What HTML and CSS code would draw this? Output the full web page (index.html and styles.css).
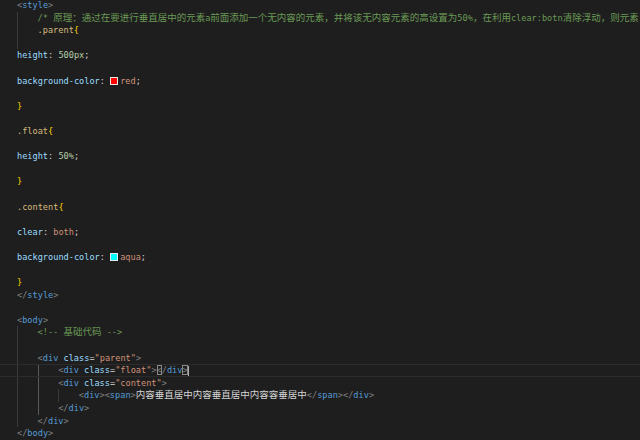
FILE: index.html
```html
<!DOCTYPE html>
<html>
<head>
<meta charset="utf-8">
<link rel="stylesheet" href="styles.css">
</head>
<body>
<div class="editor">
<div class="ln"><span class="p">&lt;</span><span class="t">style</span><span class="p">&gt;</span></div>
<div class="ln"><span class="g"></span><span class="c">/* <span class="zh">原理：通过在要进行垂直居中的元素</span>a<span class="zh">前面添加一个无内容的元素，并将该无内容元素的高设置为</span>50%<span class="zh">，在利用</span>clear:botn<span class="zh">清除浮动，则元素</span></span></div>
<div class="ln"><span class="g"></span><span class="sel">.parent</span><span class="b">{</span></div>
<div class="ln"><span class="g"></span></div>
<div class="ln"><span class="pr">height</span>: <span class="n">500px</span>;</div>
<div class="ln"></div>
<div class="ln"><span class="pr">background-color</span>: <span class="sw sw-red"></span><span class="v">red</span>;</div>
<div class="ln"></div>
<div class="ln"><span class="b">}</span></div>
<div class="ln"></div>
<div class="ln"><span class="sel">.float</span><span class="b">{</span></div>
<div class="ln"></div>
<div class="ln"><span class="pr">height</span>: <span class="n">50%</span>;</div>
<div class="ln"></div>
<div class="ln"><span class="b">}</span></div>
<div class="ln"></div>
<div class="ln"><span class="sel">.content</span><span class="b">{</span></div>
<div class="ln"></div>
<div class="ln"><span class="pr">clear</span>: <span class="v">both</span>;</div>
<div class="ln"></div>
<div class="ln"><span class="pr">background-color</span>: <span class="sw sw-aqua"></span><span class="v">aqua</span>;</div>
<div class="ln"></div>
<div class="ln"><span class="b">}</span></div>
<div class="ln"><span class="p">&lt;/</span><span class="t">style</span><span class="p">&gt;</span></div>
<div class="ln"></div>
<div class="ln"><span class="p">&lt;</span><span class="t">body</span><span class="p">&gt;</span></div>
<div class="ln"><span class="g"></span><span class="c">&lt;!-- <span class="zh">基础代码</span> --&gt;</span></div>
<div class="ln"><span class="g"></span></div>
<div class="ln"><span class="g"></span><span class="p">&lt;</span><span class="t">div</span> <span class="a">class</span>=<span class="s">"parent"</span><span class="p">&gt;</span></div>
<div class="ln cur"><span class="g"></span><span class="g ga"></span><span class="p">&lt;</span><span class="t">div</span> <span class="a">class</span>=<span class="s">"float"</span><span class="p">&gt;</span><span class="p m">&lt;</span><span class="p">/</span><span class="t">div</span><span class="p m">&gt;</span><span class="caret"></span></div>
<div class="ln"><span class="g"></span><span class="g ga"></span><span class="p">&lt;</span><span class="t">div</span> <span class="a">class</span>=<span class="s">"content"</span><span class="p">&gt;</span></div>
<div class="ln"><span class="g"></span><span class="g ga"></span><span class="g"></span><span class="p">&lt;</span><span class="t">div</span><span class="p">&gt;&lt;</span><span class="t">span</span><span class="p">&gt;</span><span class="tx zh">内容垂直居中内容垂直居中内容容垂居中</span><span class="p">&lt;/</span><span class="t">span</span><span class="p">&gt;&lt;/</span><span class="t">div</span><span class="p">&gt;</span></div>
<div class="ln"><span class="g"></span><span class="g ga"></span><span class="p">&lt;/</span><span class="t">div</span><span class="p">&gt;</span></div>
<div class="ln"><span class="g"></span><span class="p">&lt;/</span><span class="t">div</span><span class="p">&gt;</span></div>
<div class="ln"><span class="p">&lt;/</span><span class="t">body</span><span class="p">&gt;</span></div>
</div>
</body>
</html>
```
FILE: styles.css
```css
html, body {
  margin: 0;
  padding: 0;
  background: #1e1e1e;
  height: 100%;
  overflow: hidden;
}
.editor {
  margin-top: -1px;
  padding-left: 17px;
  font-family: "DejaVu Sans Mono", "Liberation Mono", "Noto Sans CJK SC", monospace;
  font-size: 8.6px;
  color: #d4d4d4;
}
.ln {
  height: 12.6px;
  line-height: 12.6px;
  white-space: pre;
}
.cur {
  margin-left: -17px;
  padding-left: 17px;
  box-sizing: border-box;
  border-top: 1px solid #2c2c2c;
  border-bottom: 1px solid #2c2c2c;
  line-height: 10.6px;
}
.g {
  display: inline-block;
  vertical-align: top;
  width: 20.6px;
  height: 12.6px;
  border-left: 1px solid #3a3a3a;
  box-sizing: border-box;
}
.cur .g { height: 10.6px; }
.ga { border-left-color: #5a5a5a; }
.zh {
  font-family: "Noto Sans CJK SC", sans-serif;
  font-size: 9.5px;
  line-height: 1;
}
.p { color: #808080; }
.t { color: #569cd6; }
.a { color: #9cdcfe; }
.s { color: #ce9178; }
.c { color: #6a9955; }
.sel { color: #d7ba7d; }
.b { color: #ffd700; }
.pr { color: #9cdcfe; }
.n { color: #b5cea8; }
.v { color: #ce9178; }
.tx { color: #d4d4d4; }
.m {
  outline: 1px solid #888888;
  outline-offset: -1px;
}
.caret {
  display: inline-block;
  vertical-align: middle;
  width: 1px;
  height: 10px;
  background: #aeafad;
}
.sw {
  display: inline-block;
  vertical-align: -1px;
  width: 8px;
  height: 8px;
  box-sizing: border-box;
  border: 1px solid #e8e8e8;
  margin: 0 2px 0 0;
}
.sw-red { background: #ff0000; }
.sw-aqua { background: #00ffff; }
```
